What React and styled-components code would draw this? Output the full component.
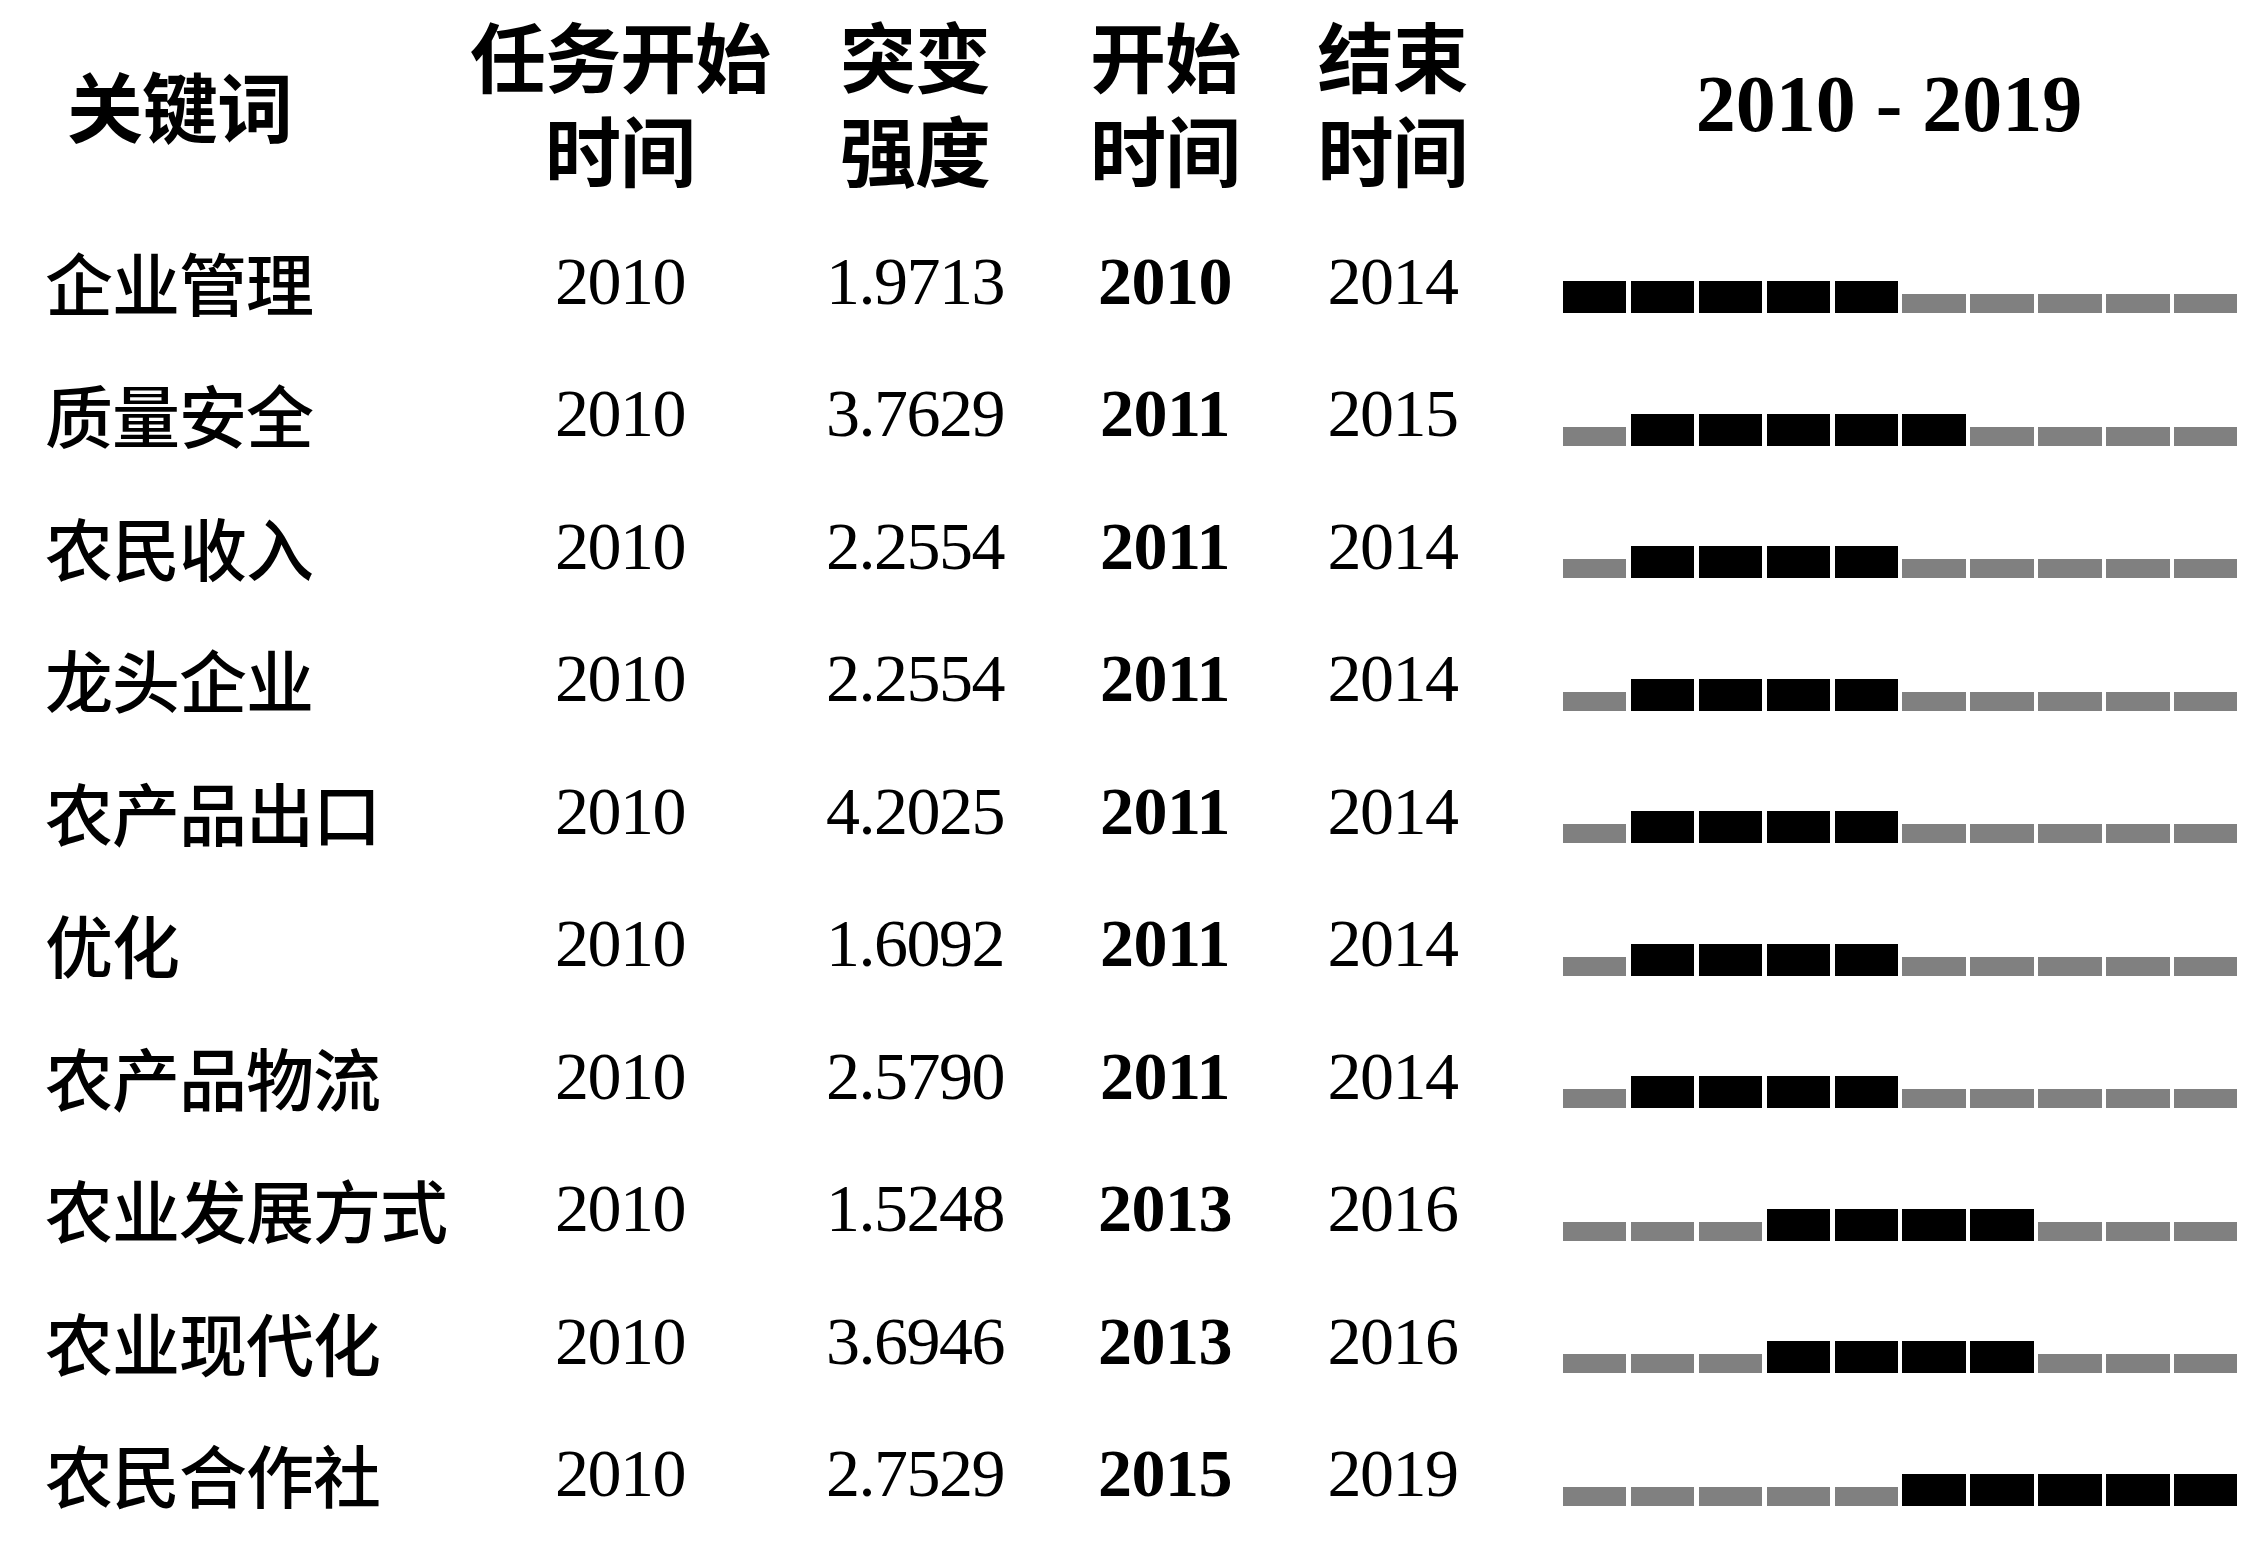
import React from 'react';
import styled, { createGlobalStyle } from 'styled-components';

const GlobalStyle = createGlobalStyle`
    html, body {
        margin: 0;
        padding: 0;
        background: #ffffff;
    }
`

const CJK = `"Noto Sans CJK SC", "Noto Sans", sans-serif`;
const SERIF = `"Liberation Serif", "Times New Roman", serif`;

const YEARS = [2010, 2011, 2012, 2013, 2014, 2015, 2016, 2017, 2018, 2019];

let rows = [
    { keyword: "企业管理", task: "2010", strength: "1.9713", start: 2010, end: 2014 },
    { keyword: "质量安全", task: "2010", strength: "3.7629", start: 2011, end: 2015 },
    { keyword: "农民收入", task: "2010", strength: "2.2554", start: 2011, end: 2014 },
    { keyword: "龙头企业", task: "2010", strength: "2.2554", start: 2011, end: 2014 },
    { keyword: "农产品出口", task: "2010", strength: "4.2025", start: 2011, end: 2014 },
    { keyword: "优化", task: "2010", strength: "1.6092", start: 2011, end: 2014 },
    { keyword: "农产品物流", task: "2010", strength: "2.5790", start: 2011, end: 2014 },
    { keyword: "农业发展方式", task: "2010", strength: "1.5248", start: 2013, end: 2016 },
    { keyword: "农业现代化", task: "2010", strength: "3.6946", start: 2013, end: 2016 },
    { keyword: "农民合作社", task: "2010", strength: "2.7529", start: 2015, end: 2019 },
]

const Table = styled.div`
    width: 2259px;
    display: grid;
    grid-template-columns: 500px 240px 350px 150px 305px 714px;
    grid-template-rows: 215px;
    grid-auto-rows: 132.5px;
    color: #000;
`

const HeadCell = styled.div`
    display: flex;
    flex-direction: column;
    align-items: ${props => props.$left ? 'flex-start' : 'center'};
    justify-content: center;
    padding-left: ${props => props.$left ? '67px' : '0'};
    padding-bottom: ${props => props.$left ? 8 : 14}px;
    font-family: ${CJK};
    font-weight: 700;
    font-size: 76px;
    letter-spacing: -1px;
    white-space: nowrap;
`

const HeadLine = styled.span`
    display: block;
    line-height: 94px;
`

const YearRange = styled.div`
    display: flex;
    align-items: center;
    justify-content: center;
    padding-right: 26px;
    padding-bottom: 6px;
    font-family: ${SERIF};
    font-weight: 700;
    font-size: 80px;
`

const Keyword = styled.div`
    display: flex;
    align-items: center;
    padding-left: 45px;
    font-family: ${CJK};
    font-weight: 500;
    font-size: 68px;
    letter-spacing: -1px;
    white-space: nowrap;
`

const Num = styled.div`
    display: flex;
    align-items: center;
    justify-content: center;
    font-family: ${SERIF};
    font-size: 68px;
    font-weight: ${props => props.$bold ? 700 : 400};
    letter-spacing: ${props => props.$bold ? '-0.5px' : '-1.5px'};
    white-space: nowrap;
`

const BarTrack = styled.div`
    display: flex;
    align-items: flex-end;
    gap: 4.5px;
    padding-left: 18px;
    padding-bottom: 34.5px;
`

const Segment = styled.div`
    width: 63.4px;
    height: ${props => props.$on ? 32 : 19}px;
    background: ${props => props.$on ? '#000000' : '#808080'};
`

const Header = ({lines, left}) => (
    <HeadCell $left={left}>
        {lines.map(line => <HeadLine key={line}>{line}</HeadLine>)}
    </HeadCell>
)

const App = () => {
    return (
        <>
            <GlobalStyle/>
            <Table>
                <Header left lines={["关键词"]}/>
                <Header lines={["任务开始", "时间"]}/>
                <Header lines={["突变", "强度"]}/>
                <Header lines={["开始", "时间"]}/>
                <Header lines={["结束", "时间"]}/>
                <YearRange>2010 - 2019</YearRange>

                {
                    rows.map(row => (
                        <React.Fragment key={row.keyword}>
                            <Keyword>{row.keyword}</Keyword>
                            <Num>{row.task}</Num>
                            <Num>{row.strength}</Num>
                            <Num $bold>{row.start}</Num>
                            <Num>{row.end}</Num>
                            <BarTrack>
                                {YEARS.map(year => (
                                    <Segment key={year} $on={year >= row.start && year <= row.end}/>
                                ))}
                            </BarTrack>
                        </React.Fragment>
                    ))
                }
            </Table>
        </>
    );
};

export default App;
